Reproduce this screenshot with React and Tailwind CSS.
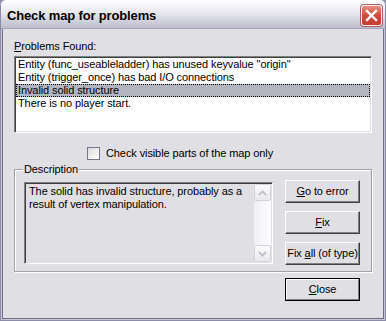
import React from "react";

const Mn = ({ children }) => <span className="underline decoration-1 underline-offset-[1px]">{children}</span>;

const Button = ({ children }) => (
  <div className="w-[75px] h-[23px] border border-t-white border-l-white border-r-[#404040] border-b-[#404040] shadow-[inset_-1px_-1px_#808080] flex items-center justify-center leading-[13px]">
    <span>{children}</span>
  </div>
);

const DefaultButton = ({ children }) => (
  <div className="w-[75px] h-[23px] border border-black">
    <div className="h-full border border-t-white border-l-white border-r-[#808080] border-b-[#808080] flex items-center justify-center leading-[13px]">
      <span>{children}</span>
    </div>
  </div>
);

const ScrollArrow = ({ up }) => (
  <div className="w-[17px] h-[17px] rounded-[2px] border border-[#d3d3dc] bg-gradient-to-b from-[#fbfbfc] to-[#e9e9ee] flex items-center justify-center">
    <svg width="9" height="6" viewBox="0 0 9 6">
      <path d={up ? "M1 5 L4.5 1.5 L8 5" : "M1 1 L4.5 4.5 L8 1"} fill="none" stroke="#c2c2cc" strokeWidth="2" />
    </svg>
  </div>
);

const problems = [
  'Entity (func_useableladder) has unused keyvalue "origin"',
  "Entity (trigger_once) has bad I/O connections",
  "Invalid solid structure",
  "There is no player start.",
];

export default function App() {
  const selected = 2;

  return (
    <div className="w-[386px] h-[321px] bg-[#e0dfe3] flex flex-col text-[11px] leading-[13px] text-black tracking-[-0.1px] font-['Liberation_Sans',Arial,sans-serif] shadow-[inset_0_0_0_1px_#8b8ba8,inset_0_0_0_2px_#c8c8d6,inset_0_0_0_3px_#6e6e8c]">
      {/* title bar */}
      <div className="h-[29px] flex items-start justify-between rounded-t-[5px] bg-gradient-to-b from-[#ffffff] via-[#e4e4ec] to-[#b9b9ca] shadow-[inset_1px_0_#8b8ba8,inset_-1px_0_#8b8ba8,inset_0_-1px_#a6a6ba]">
        <div className="pl-[7px] pt-[8px] text-[13px] leading-[16px] font-bold tracking-[-0.15px]">Check map for problems</div>
        <div className="mt-[5px] mr-[4px] w-[21px] h-[21px] rounded-[3px] border border-[#f4eeee] bg-gradient-to-b from-[#e88e80] via-[#d4483a] to-[#c23a2e] shadow-[0_0_0_1px_#a86060] flex items-center justify-center">
          <svg width="13" height="13" viewBox="0 0 13 13">
            <path d="M2 2 L11 11 M11 2 L2 11" stroke="white" strokeWidth="2.4" strokeLinecap="square" />
          </svg>
        </div>
      </div>

      {/* body */}
      <div className="flex-1 flex flex-col px-[14px] pt-[11px]">
        <div>
          <Mn>P</Mn>roblems Found:
        </div>

        <div className="mt-[3px] h-[77px] bg-white border border-t-[#808080] border-l-[#808080] border-r-white border-b-white shadow-[inset_1px_1px_#404040,inset_-1px_-1px_#e0dfe3] p-[1px]">
          {problems.map((p, i) => (
            <div
              key={i}
              className={
                i === selected
                  ? "h-[13px] pl-[2px] whitespace-nowrap bg-[#b2b4bf] outline-1 outline-dotted outline-black -outline-offset-1"
                  : "h-[13px] pl-[2px] whitespace-nowrap"
              }
            >
              {p}
            </div>
          ))}
        </div>

        <div className="mt-[14px] ml-[73px] flex items-start gap-[6px]">
          <div className="w-[13px] h-[13px] border border-[#75778c] bg-gradient-to-br from-[#dcdcd8] to-white" />
          <div>Check visible parts of the map only</div>
        </div>

        <div className="relative mt-[9px] h-[103px] border border-[#a0a0a8] shadow-[inset_1px_1px_white,1px_1px_white] pl-[9px] pt-[10px] flex items-start gap-[12px]">
          <div className="absolute left-[8px] top-[-7px] px-[1px] bg-[#e0dfe3]">Description</div>

          <div className="mt-[2px] w-[249px] h-[82px] flex border border-t-[#808080] border-l-[#808080] border-r-white border-b-white shadow-[inset_1px_1px_#404040,inset_-1px_-1px_#e0dfe3] p-[1px]">
            <div className="flex-1 pl-[3px] pt-[1px]">
              The solid has invalid structure, probably as a
              <br />
              result of vertex manipulation.
            </div>
            <div className="w-[17px] h-full flex flex-col justify-between bg-gradient-to-r from-[#eeeef3] via-[#f7f7fa] to-[#fdfdfe]">
              <ScrollArrow up />
              <ScrollArrow />
            </div>
          </div>

          <div className="flex flex-col gap-[8px]">
            <Button>
              <Mn>G</Mn>o to error
            </Button>
            <Button>
              <Mn>F</Mn>ix
            </Button>
            <Button>
              Fix <Mn>a</Mn>ll (of type)
            </Button>
          </div>
        </div>

        <div className="mt-[6px] mr-[12px] self-end">
          <DefaultButton>
            <Mn>C</Mn>lose
          </DefaultButton>
        </div>
      </div>
    </div>
  );
}
